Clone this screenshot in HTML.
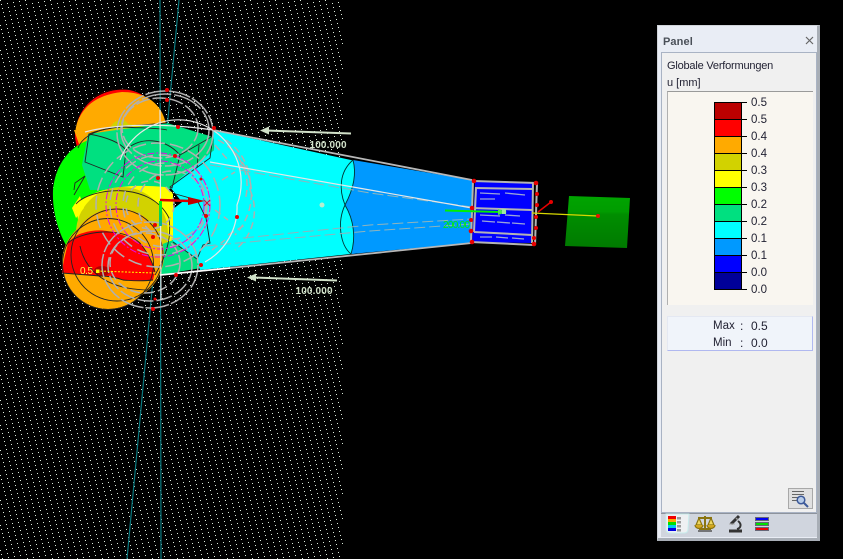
<!DOCTYPE html>
<html><head><meta charset="utf-8"><style>
html,body{margin:0;padding:0;background:#000;width:843px;height:559px;overflow:hidden}
svg{position:absolute;left:0;top:0;display:block;overflow:visible}
#panel{position:absolute;left:657px;top:25px;width:163px;height:516px;background:#e9edf5;font-family:"Liberation Sans",sans-serif;color:#223;box-sizing:border-box;border:1px solid #d0d4da;border-right:3px solid #a8aeb6;border-bottom:3px solid #a8aeb6;}
.abs{position:absolute;white-space:nowrap}
#inner{position:absolute;left:3px;top:26px;width:156px;height:461px;background:#f0f0f0;border:1px solid #a9b3c4;box-sizing:border-box}
#legend{position:absolute;left:9px;top:65px;width:146px;height:214px;background:#f9f6f0;border-top:1px solid #9a9a9a;border-left:1px solid #b0b0b0;box-sizing:border-box}
#stats{position:absolute;left:9px;top:290px;width:146px;height:35px;background:#f0f4fa;border:1px solid #e4e8f2;border-right:1px solid #b0b8f0;border-bottom:1px solid #b0b8f0;box-sizing:border-box}
#tabs{position:absolute;left:3px;top:487px;width:156px;height:24px;background:#d0d5de;border-top:1px solid #8d939c;box-sizing:border-box}
.v{font-size:12px;line-height:14px}
</style></head><body>
<svg width="843" height="559" viewBox="0 0 843 559">
<defs>
<pattern id="d" width="25" height="25" patternUnits="userSpaceOnUse">
<g fill="#dcecdc" shape-rendering="crispEdges">
<rect x="0" y="0" width="1" height="1"/><rect x="1" y="4" width="1" height="1"/><rect x="2" y="8" width="1" height="1"/><rect x="3" y="12" width="1" height="1"/><rect x="4" y="16" width="1" height="1"/><rect x="5" y="20" width="1" height="1"/><rect x="6" y="24" width="1" height="1"/><rect x="7" y="3" width="1" height="1"/><rect x="8" y="7" width="1" height="1"/><rect x="9" y="11" width="1" height="1"/><rect x="10" y="15" width="1" height="1"/><rect x="11" y="19" width="1" height="1"/><rect x="12" y="23" width="1" height="1"/><rect x="13" y="2" width="1" height="1"/><rect x="14" y="6" width="1" height="1"/><rect x="15" y="10" width="1" height="1"/><rect x="16" y="14" width="1" height="1"/><rect x="17" y="18" width="1" height="1"/><rect x="18" y="22" width="1" height="1"/><rect x="19" y="1" width="1" height="1"/><rect x="20" y="5" width="1" height="1"/><rect x="21" y="9" width="1" height="1"/><rect x="22" y="13" width="1" height="1"/><rect x="23" y="17" width="1" height="1"/><rect x="24" y="21" width="1" height="1"/>
</g></pattern>
<linearGradient id="gs" x1="0" y1="0" x2="0" y2="1"><stop offset="0" stop-color="#00a400"/><stop offset=".3" stop-color="#009c00"/><stop offset=".35" stop-color="#008e00"/><stop offset="1" stop-color="#007a00"/></linearGradient>
<linearGradient id="gv" x1="0" y1="0" x2="0" y2="1"><stop offset="0" stop-color="#00ff00"/><stop offset="1" stop-color="#00b0a0"/></linearGradient>
</defs>
<rect width="843" height="559" fill="#000"/>
<rect width="343" height="559" fill="url(#d)"/>
<g stroke="#0a7a80" stroke-width="1.200" fill="none"><path d="M160 0L161 559"/><path d="M179 0L127 559"/></g>

<!-- top orange lobe -->
<circle cx="120" cy="134" r="45" fill="#f00"/>
<path d="M75 130C80 108 95 95 122 92C150 92 167 108 167 135L167 175L90 175L74 130Z" fill="#ffaa00"/>
<path d="M110 128C115 118 125 118 128 124L170 128L170 170L110 170Z" fill="#d2d200"/>
<path d="M75 130C78 108 95 90 122 89C140 89 155 96 165 106" fill="none" stroke="#000" stroke-width="1"/>
<!-- green -->
<path d="M92 139C70 145 55 165 53 190C52 215 60 235 67 247L100 250L140 165Z" fill="#00ff00"/>
<!-- mint -->
<path d="M88 134L167 123L213 137L214 150L170 189L90 190L82 165Z" fill="#00e080"/>
<!-- yellow -->
<path d="M76 205C90 190 120 183 165 187L173 193L173 240L155 250L80 235Z" fill="#ffff00"/>
<!-- olive -->
<circle cx="122" cy="233" r="46" fill="#d2d200"/>
<path d="M72 208L80 196L84 208L76 218Z" fill="#ffff00"/>
<!-- mint lower -->
<path d="M173 240L197 259L201 268L160 275L160 245Z" fill="#00e080"/>
<!-- orange circles -->
<circle cx="117" cy="255" r="47" fill="#ffaa00"/>
<circle cx="108" cy="263" r="46" fill="#ffaa00"/>
<!-- red -->
<path d="M62 273C63 262 66 252 68 243C72 238 78 234 83 233C92 230 100 230 107 231C120 233 130 238 140 243C147 252 152 260 155 272L153 280C145 281 135 281 123 280C115 277 108 276 100 276C88 275 75 274 62 273Z" fill="#f00"/>
<ellipse cx="102" cy="271" rx="8" ry="5" fill="#b00000"/>
<!-- cone -->
<path d="M213 130L360 162L360 253L200 270L197 259L173 241L173 209L182 202L170 187L214 150Z" fill="#00ffff"/>
<path d="M353 160L472 180L472 243L351 254C356 238 354 220 345 205C353 190 357 175 353 160Z" fill="#0099ff"/>
<path d="M173 193L182 202L173 209Z" fill="#000"/>
<rect x="174" y="196" width="1" height="1" fill="#fff"/><rect x="177" y="200" width="1" height="1" fill="#fff"/><rect x="175" y="204" width="1" height="1" fill="#fff"/>
<!-- black outlines -->
<g fill="none" stroke="#222" stroke-width=".9">
<path d="M89 134L85 162L123 177L126 150C118 140 100 136 89 134Z"/>
<path d="M89 134C110 125 150 125 167 123"/>
<path d="M126 150C140 136 165 138 180 155L172 188L170 187L210 158L213 136"/>
<path d="M199 145L197 168M180 155L213 136"/>
<path d="M78 148C83 135 100 128 122 127C140 128 160 128 167 130"/>
<path d="M74 195L85 176L75 183L74 190M76 204C90 188 150 180 169 218C172 240 165 258 155 275"/>
<circle cx="117" cy="255" r="46"/>
<circle cx="108" cy="264" r="45.5"/>
<path d="M62 273C75 274 88 275 100 276C108 276 115 277 123 280C135 281 145 281 153 280M68 243C80 232 120 225 140 243C147 252 152 260 155 272"/>
<path d="M80 246C84 265 100 290 150 290"/>
<path d="M173 242L197 259L203 245L210 243L206 218L197 200L172 193"/>
<path d="M353 160C339 172 339 190 345 205C353 190 357 175 353 160M345 205C337 222 340 245 351 254C356 238 354 220 345 205" stroke="#033" stroke-width=".9"/>
</g>
<!-- gray wires -->
<g fill="none" stroke="#b0b0b0" stroke-width="1.500">
<ellipse cx="165" cy="133" rx="48" ry="42" stroke-dasharray="22 2"/>
<ellipse cx="165" cy="130" rx="44" ry="36" stroke-dasharray="30 3"/>
<ellipse cx="160" cy="128" rx="38" ry="30" stroke-dasharray="14 3"/>
<circle cx="160" cy="205" r="50" stroke-dasharray="12 6"/>
<circle cx="165" cy="205" r="42" stroke-dasharray="10 7"/>
<circle cx="158" cy="205" r="62" stroke-dasharray="14 5"/>
<circle cx="172" cy="205" r="34" stroke-dasharray="9 6"/>
<circle cx="150" cy="205" r="24" stroke-dasharray="7 6"/>
<ellipse cx="150" cy="265" rx="48" ry="43" stroke-dasharray="24 2"/>
<ellipse cx="150" cy="266" rx="42" ry="35" stroke-dasharray="16 3"/>
<ellipse cx="145" cy="263" rx="35" ry="30" stroke-dasharray="10 4"/>
<path d="M226 140A54 54 0 0 1 250 190M218 140A60 60 0 0 1 235 235M250 190A50 50 0 0 1 235 250M215 145L228 160M222 180L235 172M215 210L228 220M228 235L245 225M232 150A50 50 0 0 1 245 200M240 165L250 172M212 250L225 240" stroke-dasharray="7 4"/>
<path d="M210 165L370 193L472 207M243 238L370 225L472 219M205 246L370 231L472 224" stroke-width="1" stroke-dasharray="11 4" stroke="#8fb4bc"/>
</g>
<g fill="none" stroke="#e60ce6" stroke-width="1" stroke-dasharray="7 2 2 2">
<circle cx="158" cy="205" r="52"/><circle cx="160" cy="205" r="44"/>
</g>
<g fill="none" stroke="#e8e8e8" stroke-width="1.200">
<path d="M120 160A62 62 0 0 1 237 205A62 62 0 0 1 205 262" />
<path d="M160 110L161 300" stroke-width="1.200"/>
<path d="M210 162L370 190L472 208"/>
<path d="M85 132C110 125 160 122 213 130"/>
</g>
<!-- cone edges -->
<g fill="none" stroke="#b8b8b8" stroke-width="1.800"><path d="M213 130L472 180M160 275L230 268L472 243"/></g>
<path d="M160 275L230 268" stroke="#fff" stroke-width="1.500"/>
<circle cx="322" cy="205" r="2.500" fill="#b8eed0"/>
<!-- red arrow -->
<path d="M160 200L190 201" stroke="#d80000" stroke-width="2.500"/>
<path d="M188 197L205 201L188 205Z" fill="#c00000"/>
<path d="M204 200L210 206M210 200L204 206" stroke="#e00030" stroke-width="1"/>
<rect x="159" y="201" width="3" height="25" fill="url(#gv)"/>
<!-- yellow label -->
<path d="M97 271L155 273" stroke="#ffff00" stroke-width="1" stroke-dasharray="2 1.500"/>
<rect x="96" y="269.500" width="3.500" height="3.500" fill="#ffff00"/>
<text x="80" y="274" font-family="Liberation Sans,sans-serif" font-size="10" textLength="13" fill="#ffff44">0.5</text>
<!-- red nodes -->
<g fill="#e80000">
<circle cx="167" cy="90" r="2"/><circle cx="167" cy="100" r="2"/><circle cx="178" cy="127" r="2"/><circle cx="214" cy="128" r="2"/><circle cx="175" cy="156" r="2"/><circle cx="158" cy="178" r="2"/><circle cx="155" cy="225" r="2"/><circle cx="153" cy="237" r="2"/><circle cx="176" cy="275" r="2"/><circle cx="201" cy="265" r="2"/><circle cx="155" cy="299" r="1.500"/><circle cx="153" cy="309" r="2"/><circle cx="206" cy="216" r="2"/><circle cx="237" cy="217" r="2"/><circle cx="201" cy="179" r="1.500"/>
</g>
<!-- arrows + labels -->
<g stroke="#d0e0c8" stroke-width="2" fill="none"><path d="M351 133.500L266 130.500M337 280.500L253 277.500"/></g>
<g fill="#d0e0c8">
<path d="M260 130.500L269 126.500L269 134.500Z"/>
<path d="M247 277.500L256 273.500L256 281.500Z"/>
<text x="309.500" y="148" font-family="Liberation Sans,sans-serif" font-weight="bold" font-size="10" textLength="37">100.000</text>
<text x="295.500" y="294" font-family="Liberation Sans,sans-serif" font-weight="bold" font-size="10" textLength="37">100.000</text>
</g>
<!-- cylinder -->
<path d="M475 181L532 183L531 243L472 242Z" fill="#0000ff"/>
<g fill="none" stroke="#b4b4b4" stroke-width="2">
<path d="M473 181L537 183M475 188L532 189M471 208L532 210M474 232L532 235M471 242L534 245"/>
<path d="M473 181L471 242M476 188L474 232M533 183L532 243M537 183L535 245"/>
<path d="M480 193L500 194M505 193L525 195M480 199L495 199M482 221L495 222M497 222L510 223M512 223L525 224M480 237L492 237M496 237L508 238M512 238L524 239M480 215L500 216M505 215L520 216" stroke-width="1.300" stroke="#9aa5d8"/>
</g>
<g fill="#e80000">
<circle cx="474" cy="181" r="2.300"/><circle cx="536" cy="183" r="2.300"/><circle cx="537" cy="194" r="2"/><circle cx="472" cy="208" r="2.300"/><circle cx="471" cy="220" r="2"/><circle cx="471" cy="231" r="2.300"/><circle cx="472" cy="242" r="2.300"/><circle cx="534" cy="244" r="2.300"/><circle cx="537" cy="205" r="2"/><circle cx="536" cy="217" r="2"/><circle cx="536" cy="228" r="2"/><circle cx="534" cy="238" r="2"/>
</g>
<path d="M538 212L551 202" stroke="#e80000" stroke-width="1.500"/><circle cx="551" cy="202" r="2" fill="#e80000"/>
<!-- green square -->
<path d="M569 196L630 198L627 248L565 246Z" fill="url(#gs)"/>
<path d="M532 213L598 216" stroke="#d8d800" stroke-width="1.200"/>
<circle cx="598" cy="216" r="2" fill="#e81000"/>
<!-- green arrow -->
<path d="M445 210.500L500 212" stroke="#00f000" stroke-width="2"/>
<path d="M498 209L507 212L498 215Z" fill="#50e050"/>
<rect x="502" y="209" width="4" height="5" fill="#a0e8a0"/>
<text x="443" y="228" font-family="Liberation Sans,sans-serif" font-size="10" fill="#00f000" textLength="27">200.00</text>
</svg>

<div id="panel">
  <div class="abs" style="left:5px;top:10px;font-size:11px;font-weight:bold;color:#4a5058;letter-spacing:.1px">Panel</div>
  <svg style="left:147px;top:10px" width="10" height="10"><path d="M1 1L8 8M8 1L1 8" stroke="#666" stroke-width="1.200"/></svg>
  <div id="inner"></div>
  <div class="abs" style="left:9px;top:33px;font-size:11px;color:#223;line-height:14px;letter-spacing:-.2px">Globale Verformungen</div>
  <div class="abs" style="left:9px;top:50px;font-size:11px;color:#223;line-height:14px">u [mm]</div>
  <div id="legend"></div>
  <svg style="left:56px;top:76px" width="90" height="200">
    <g shape-rendering="crispEdges">
    <rect x="1" y="0" width="26" height="17" fill="#bb0000"/><rect x="1" y="17" width="26" height="17" fill="#ff0000"/><rect x="1" y="34" width="26" height="17" fill="#ffaa00"/><rect x="1" y="51" width="26" height="17" fill="#d2d200"/><rect x="1" y="68" width="26" height="17" fill="#ffff00"/><rect x="1" y="85" width="26" height="17" fill="#00ff00"/><rect x="1" y="102" width="26" height="17" fill="#00e080"/><rect x="1" y="119" width="26" height="17" fill="#00ffff"/><rect x="1" y="136" width="26" height="17" fill="#0099ff"/><rect x="1" y="153" width="26" height="17" fill="#0000ff"/><rect x="1" y="170" width="26" height="17" fill="#000099"/>
    <path d="M0.500 0V187.500M27.500 0V187.500M0 0.500H33M0 17.500H33M0 34.500H33M0 51.500H33M0 68.500H33M0 85.500H33M0 102.500H33M0 119.500H33M0 136.500H33M0 153.500H33M0 170.500H33M0 187.500H33" stroke="#000" stroke-width="1" fill="none"/>
    </g>
    <g font-family="Liberation Sans,sans-serif" font-size="11.500" fill="#223">
    <text x="37" y="4">0.5</text><text x="37" y="21">0.5</text><text x="37" y="38">0.4</text><text x="37" y="55">0.4</text><text x="37" y="72">0.3</text><text x="37" y="89">0.3</text><text x="37" y="106">0.2</text><text x="37" y="123">0.2</text><text x="37" y="140">0.1</text><text x="37" y="157">0.1</text><text x="37" y="174">0.0</text><text x="37" y="191">0.0</text>
    </g>
  </svg>
  <div id="stats"></div>
  <div class="abs v" style="left:55px;top:293px;color:#223;font-size:11.500px">Max</div><div class="abs v" style="left:82px;top:293px">:</div><div class="abs v" style="left:93px;top:293px">0.5</div>
  <div class="abs v" style="left:55px;top:310px;color:#223;font-size:11.500px">Min</div><div class="abs v" style="left:82px;top:310px">:</div><div class="abs v" style="left:93px;top:310px">0.0</div>
  <svg style="left:130px;top:462px" width="26" height="22">
    <rect x="0.500" y="0.500" width="24" height="20" fill="#e0e0e0" stroke="#a8a8a8"/>
    <path d="M4 3.500H16M4 6.500H16M4 9.500H11M4 12.500H10" stroke="#666" stroke-width="1"/>
    <circle cx="13" cy="12" r="3.800" fill="#b8cce8" stroke="#3d5a9a" stroke-width="1.500"/>
    <path d="M16 15L20 19" stroke="#3d5a9a" stroke-width="2"/>
  </svg>
  <div id="tabs"></div>
  <svg style="left:3px;top:487px" width="156" height="24">
    <path d="M5 1H28L27 16Q27 20 23 20H9Q5 20 5 16Z" fill="#eef0f2" stroke="#c8ecec"/>
    <g shape-rendering="crispEdges">
    <rect x="7" y="3" width="8" height="3" fill="#f00000"/><rect x="7" y="6" width="8" height="3" fill="#ffaa00"/><rect x="7" y="9" width="8" height="3" fill="#00e000"/><rect x="7" y="12" width="8" height="3" fill="#00ccee"/><rect x="7" y="15" width="8" height="3" fill="#0000e0"/>
    <rect x="16" y="4" width="4" height="2.500" fill="#999"/><rect x="16" y="8" width="4" height="2.500" fill="#999"/><rect x="16" y="12" width="4" height="2.500" fill="#999"/><rect x="16" y="16" width="4" height="2.500" fill="#999"/>
    </g>
    <g fill="none" stroke="#8a7410" stroke-width="1.200">
    <path d="M37 5H51M44 3V16M38 16H50" stroke="#8a7410" stroke-width="2"/>
    <path d="M38 5L35 12H41ZM50 5L47 12H53Z" fill="#f0d860"/>
    <path d="M34 12A4 3.500 0 0 0 42 12M46 12A4 3.500 0 0 0 54 12" fill="#d4a820"/>
    <path d="M37 18H51" stroke="#555" stroke-width="1.500"/>
    </g>
    <g fill="none" stroke="#333">
    <path d="M70 11L78 3" stroke-width="3"/>
    <path d="M75 5L77 7" stroke="#999" stroke-width="1.500"/>
    <path d="M77 8C81 11 80 15 76 16" stroke-width="2"/>
    <path d="M68 18H81" stroke-width="3"/>
    <path d="M68 11H74" stroke="#aaa"/>
    </g>
    <g shape-rendering="crispEdges" stroke="#667" stroke-width="1">
    <rect x="94.500" y="4.500" width="13" height="3" fill="#0000f0"/>
    <rect x="94.500" y="9.500" width="13" height="3" fill="#00e000"/>
    <rect x="94.500" y="14.500" width="13" height="3" fill="#f00000"/>
    </g>
  </svg>
</div>
</body></html>
